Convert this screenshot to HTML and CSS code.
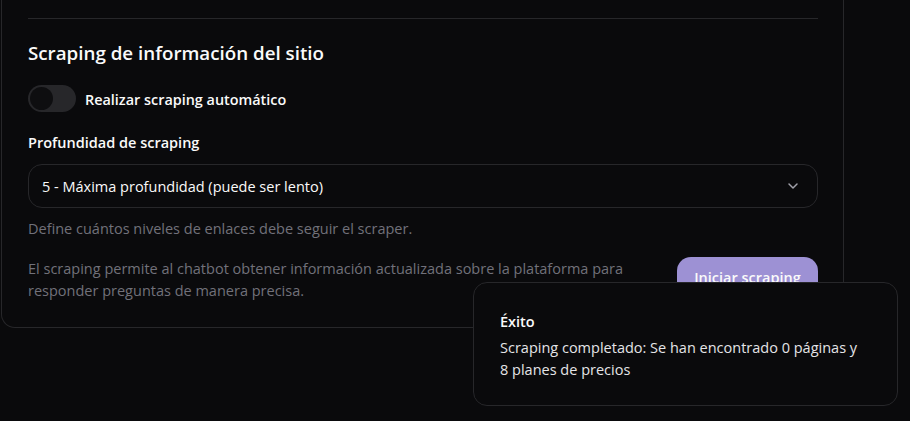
FILE: index.html
```html
<!DOCTYPE html>
<html lang="es">
<head>
<meta charset="utf-8">
<title>Scraping</title>
<link rel="stylesheet" href="styles.css">
</head>
<body>
<div class="page">
  <section class="card">
    <hr class="divider">
    <h2 class="title">Scraping de información del sitio</h2>
    <label class="switch-row">
      <span class="switch"><span class="knob"></span></span>
      <span class="switch-label">Realizar scraping automático</span>
    </label>
    <div class="field">
      <div class="field-label">Profundidad de scraping</div>
      <div class="select">
        <span>5 - Máxima profundidad (puede ser lento)</span>
        <svg class="chev" width="16" height="16" viewBox="0 0 16 16" fill="none" stroke="currentColor" stroke-width="1.5" stroke-linecap="round" stroke-linejoin="round"><path d="M4 6l4 4 4-4"/></svg>
      </div>
      <div class="hint">Define cuántos niveles de enlaces debe seguir el scraper.</div>
    </div>
    <div class="action-row">
      <p class="desc">El scraping permite al chatbot obtener información actualizada sobre la plataforma para responder preguntas de manera precisa.</p>
      <button class="btn">Iniciar scraping</button>
    </div>
  </section>
</div>
<div class="toast">
  <div class="toast-title">Éxito</div>
  <div class="toast-msg">Scraping completado: Se han encontrado 0 páginas y 8 planes de precios</div>
</div>
</body>
</html>
```
FILE: styles.css
```css
* { box-sizing: border-box; }
html, body { margin: 0; padding: 0; }
body {
  background: #0a0a0c;
  font-family: "Open Sans", "Noto Sans", sans-serif;
  color: #fafafa;
  height: 421px;
  overflow: hidden;
}
.page { padding-left: 1px; }
.card {
  width: 843px;
  border: 1px solid #27272a;
  border-top: none;
  border-radius: 0 0 14px 14px;
  padding: 18px 25px 25px 26px;
}
.divider {
  margin: 0;
  border: none;
  border-top: 1px solid #27272a;
}
.title {
  margin: 20px 0 0;
  font-size: 18.75px;
  line-height: 28px;
  font-weight: 600;
}
.switch-row {
  display: flex;
  align-items: center;
  gap: 9px;
  margin-top: 18px;
}
.switch {
  width: 48px;
  height: 27px;
  border-radius: 14px;
  background: #27272a;
  padding: 2px;
  display: flex;
  align-items: center;
}
.knob {
  width: 23px;
  height: 23px;
  border-radius: 50%;
  background: #0e0e10;
}
.switch-label {
  font-size: 14.4px;
  font-weight: 600;
  line-height: 20px;
  margin-top: 2px;
}
.field { margin-top: 21px; }
.field-label {
  font-size: 14.5px;
  font-weight: 600;
  line-height: 20px;
}
.select {
  margin-top: 11px;
  height: 44px;
  border: 1px solid #27272a;
  border-radius: 14px;
  display: flex;
  align-items: center;
  justify-content: space-between;
  padding: 0 16px 0 13px;
  font-size: 14.5px;
  color: #fafafa;
}
.chev { color: #a1a1aa; }
.hint {
  margin-top: 11px;
  font-size: 14.5px;
  line-height: 20px;
  color: #71717a;
}
.action-row {
  display: flex;
  align-items: center;
  justify-content: space-between;
  gap: 40px;
  margin-top: 19px;
}
.desc {
  margin: 0;
  flex: 1;
  font-size: 14.5px;
  line-height: 22px;
  color: #71717a;
}
.btn {
  flex: none;
  width: 141px;
  height: 40px;
  border: none;
  border-radius: 14px;
  background: #9d91d4;
  color: #fafafa;
  font-family: inherit;
  font-size: 14.5px;
  font-weight: 600;
  margin-top: -6px;
}
.toast {
  position: fixed;
  right: 12px;
  bottom: 15px;
  width: 425px;
  height: 124px;
  background: #0a0a0c;
  border: 1px solid #27272a;
  border-radius: 14px;
  padding: 29px 34px 24px 26px;
}
.toast-title {
  font-size: 14.5px;
  font-weight: 600;
  line-height: 20px;
}
.toast-msg {
  margin-top: 5px;
  font-size: 14.5px;
  line-height: 22px;
  color: #e4e4e7;
}
```
